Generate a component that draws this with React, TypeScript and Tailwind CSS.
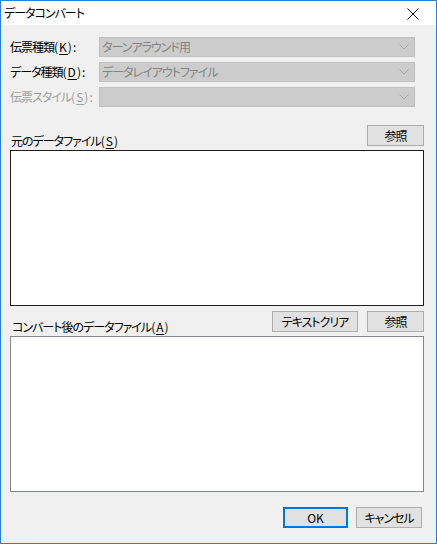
import React from 'react';

const font = { fontFamily: '"Noto Sans CJK JP", "Noto Sans", sans-serif' };

// mnemonic letter, e.g. (K)
const Mn = ({ children }: { children: React.ReactNode }) => <span className="underline underline-offset-2">{children}</span>;

const Key = ({ k, colon }: { k: string; colon?: boolean }) => (
  <span className="tracking-[1px]">(<Mn>{k}</Mn>){colon ? ':' : ''}</span>
);

const Chevron = () => (
  <svg width="10" height="6" viewBox="0 0 10 6" className="shrink-0">
    <path d="M0.5 0.5 L5 5 L9.5 0.5" fill="none" stroke="#a6a6a6" strokeWidth="1" />
  </svg>
);

const ComboRow = ({ label, value, disabled }: { label: React.ReactNode; value: string; disabled?: boolean }) => (
  <div className="flex items-center h-[20px]">
    <div className={`w-[89px] whitespace-nowrap text-[12px] leading-none ${disabled ? 'text-[#a0a0a0]' : 'text-black'}`}>{label}</div>
    <div className="flex items-center justify-between w-[316px] h-[20px] bg-[#cccccc] border border-[#bfbfbf] pl-[2px] pr-[5px]">
      <span className="text-[12px] text-[#838383] leading-none">{value}</span>
      <Chevron />
    </div>
  </div>
);

const Btn = ({ children, w, primary }: { children: React.ReactNode; w: string; primary?: boolean }) => (
  <button
    className={`${w} h-[21px] flex items-center justify-center text-[12px] leading-none text-black bg-[#e1e1e1] ${primary ? 'border-2 border-[#0078d7]' : 'border border-[#adadad]'}`}
  >
    {children}
  </button>
);

export default function App() {
  return (
    <div style={font} className="w-[437px] h-[544px] border border-[#2b7fd6] bg-[#f0f0f0] flex flex-col tracking-[-1px] [font-feature-settings:'palt']">
      <div className="h-[24px] bg-white flex items-center justify-between pl-[3px] pr-[17px]">
        <span className="text-[12px] text-black leading-none">データコンバート</span>
        <svg width="12" height="12" viewBox="0 0 12 12" className="mt-[2px]">
          <path d="M0.5 0.5 L11.5 11.5 M11.5 0.5 L0.5 11.5" stroke="#111" strokeWidth="1" />
        </svg>
      </div>
      <div className="flex flex-col pl-[9px] pt-[12px]">
        <div className="flex flex-col gap-[5px]">
          <ComboRow label={<>伝票種類<Key k="K" colon /></>} value="ターンアラウンド用" />
          <ComboRow label={<>データ種類<Key k="D" colon /></>} value="データレイアウトファイル" />
          <ComboRow label={<>伝票スタイル<Key k="S" colon /></>} value="" disabled />
        </div>
        <div className="flex items-end justify-between w-[414px] mt-[18px]">
          <span className="text-[12px] text-black leading-none mb-[-1px] ml-[1px]">元のデータファイル<Key k="S" /></span>
          <Btn w="w-[57px]">参照</Btn>
        </div>
        <div className="w-[414px] h-[156px] bg-white border border-[#1e1e1e] mt-[4px]" />
        <div className="flex items-end w-[414px] mt-[5px]">
          <span className="text-[12px] text-black leading-none mb-[-1px] ml-[2px]">コンバート後のデータファイル<Key k="A" /></span>
          <div className="ml-auto flex gap-[9px]">
            <Btn w="w-[86px]">テキストクリア</Btn>
            <Btn w="w-[57px]">参照</Btn>
          </div>
        </div>
        <div className="w-[414px] h-[156px] bg-white border border-[#828790] mt-[4px]" />
        <div className="flex justify-end gap-[8px] w-[412px] mt-[15px]">
          <Btn w="w-[65px]" primary><span className="tracking-normal">OK</span></Btn>
          <Btn w="w-[66px]">キャンセル</Btn>
        </div>
      </div>
    </div>
  );
}
